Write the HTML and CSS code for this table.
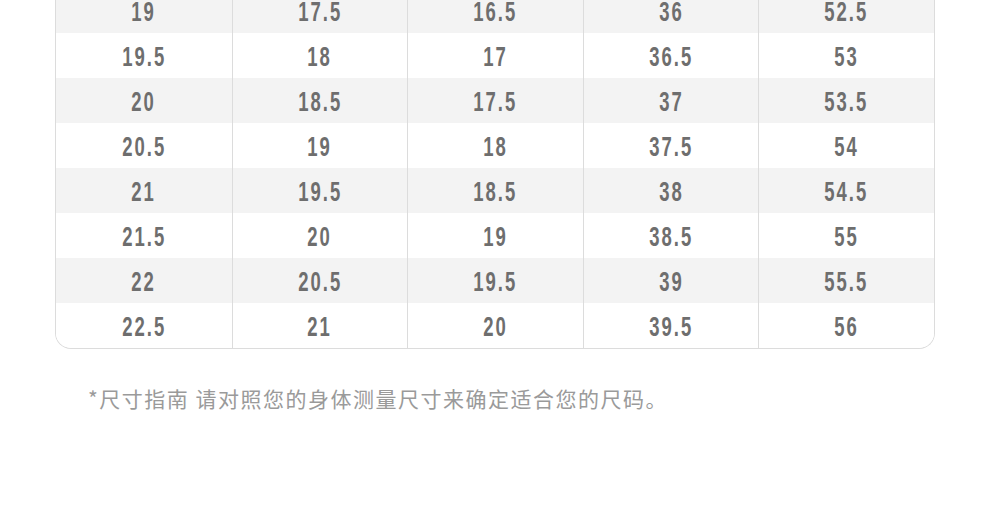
FILE: index.html
```html
<!DOCTYPE html>
<html lang="zh-CN">
<head>
<meta charset="utf-8">
<link rel="stylesheet" href="styles.css">
</head>
<body>
<div class="page">
  <div class="table">
    <div class="row alt"><div class="cell"><span class="num">19</span></div><div class="cell"><span class="num">17.5</span></div><div class="cell"><span class="num">16.5</span></div><div class="cell"><span class="num">36</span></div><div class="cell"><span class="num">52.5</span></div></div>
    <div class="row"><div class="cell"><span class="num">19.5</span></div><div class="cell"><span class="num">18</span></div><div class="cell"><span class="num">17</span></div><div class="cell"><span class="num">36.5</span></div><div class="cell"><span class="num">53</span></div></div>
    <div class="row alt"><div class="cell"><span class="num">20</span></div><div class="cell"><span class="num">18.5</span></div><div class="cell"><span class="num">17.5</span></div><div class="cell"><span class="num">37</span></div><div class="cell"><span class="num">53.5</span></div></div>
    <div class="row"><div class="cell"><span class="num">20.5</span></div><div class="cell"><span class="num">19</span></div><div class="cell"><span class="num">18</span></div><div class="cell"><span class="num">37.5</span></div><div class="cell"><span class="num">54</span></div></div>
    <div class="row alt"><div class="cell"><span class="num">21</span></div><div class="cell"><span class="num">19.5</span></div><div class="cell"><span class="num">18.5</span></div><div class="cell"><span class="num">38</span></div><div class="cell"><span class="num">54.5</span></div></div>
    <div class="row"><div class="cell"><span class="num">21.5</span></div><div class="cell"><span class="num">20</span></div><div class="cell"><span class="num">19</span></div><div class="cell"><span class="num">38.5</span></div><div class="cell"><span class="num">55</span></div></div>
    <div class="row alt"><div class="cell"><span class="num">22</span></div><div class="cell"><span class="num">20.5</span></div><div class="cell"><span class="num">19.5</span></div><div class="cell"><span class="num">39</span></div><div class="cell"><span class="num">55.5</span></div></div>
    <div class="row"><div class="cell"><span class="num">22.5</span></div><div class="cell"><span class="num">21</span></div><div class="cell"><span class="num">20</span></div><div class="cell"><span class="num">39.5</span></div><div class="cell"><span class="num">56</span></div></div>
  </div>
  <p class="note">*尺寸指南 请对照您的身体测量尺寸来确定适合您的尺码。</p>
</div>
</body>
</html>
```

FILE: styles.css
```css
html, body {
  margin: 0;
  padding: 0;
  background: #ffffff;
}
.page {
  width: 990px;
  height: 514px;
  overflow: hidden;
}
.table {
  margin: -12px 55px 0 55px;
  border: 1px solid #dcdcdc;
  border-top: none;
  border-radius: 0 0 16px 16px;
  overflow: hidden;
}
.row {
  display: grid;
  grid-template-columns: repeat(5, 1fr);
  height: 45px;
  background: #ffffff;
}
.row.alt {
  background: #f3f3f3;
}
.cell {
  display: flex;
  align-items: center;
  justify-content: center;
  border-left: 1px solid #dcdcdc;
}
.cell:first-child {
  border-left: none;
}
.num {
  display: inline-block;
  font-family: "Liberation Sans", Arial, sans-serif;
  font-weight: 700;
  font-size: 28px;
  line-height: 32px;
  letter-spacing: 3px;
  color: #6e6e6e;
  transform: scaleX(0.66);
  margin-top: 2px;
}
.note {
  margin: 37px 0 0 0;
  padding-left: 88px;
  font-family: "Noto Sans CJK SC", "Noto Sans", sans-serif;
  font-size: 21px;
  line-height: 24px;
  letter-spacing: 1.5px;
  color: #9a9a9a;
}
```
